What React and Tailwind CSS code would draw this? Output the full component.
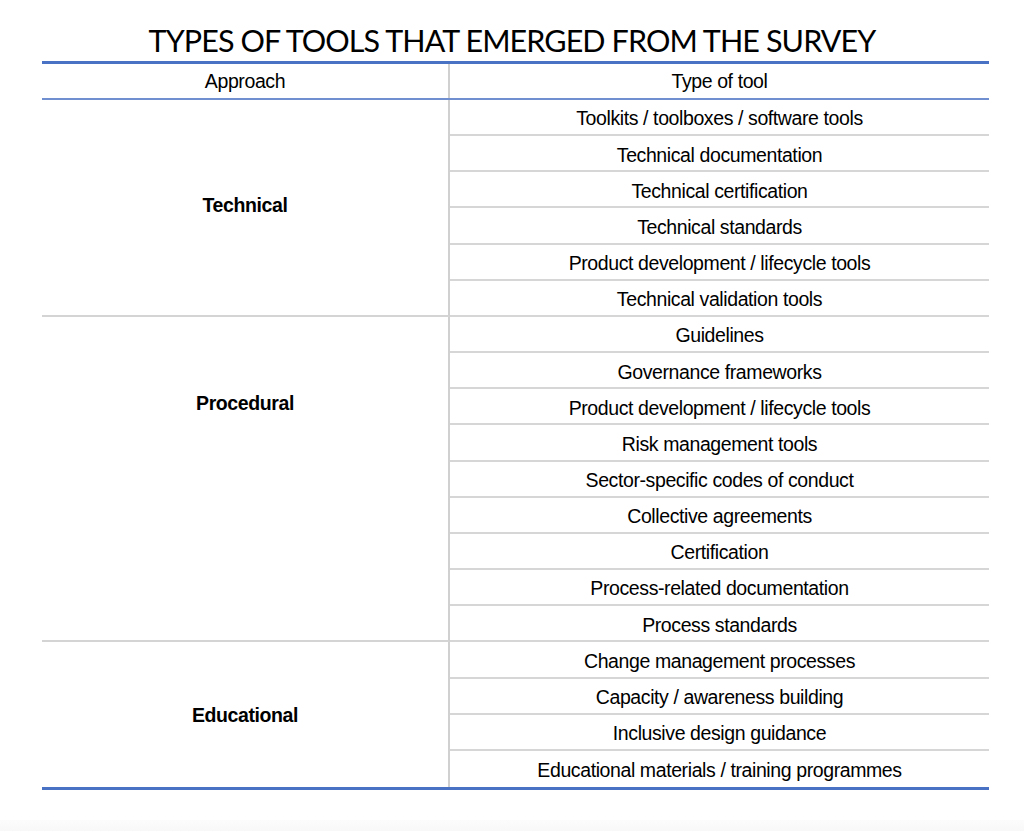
import React from "react";

const groups = [
  {
    name: "Technical",
    pt: "pt-[93px]",
    items: [
      "Toolkits / toolboxes / software tools",
      "Technical documentation",
      "Technical certification",
      "Technical standards",
      "Product development / lifecycle tools",
      "Technical validation tools",
    ],
  },
  {
    name: "Procedural",
    pt: "pt-[74px]",
    items: [
      "Guidelines",
      "Governance frameworks",
      "Product development / lifecycle tools",
      "Risk management tools",
      "Sector-specific codes of conduct",
      "Collective agreements",
      "Certification",
      "Process-related documentation",
      "Process standards",
    ],
  },
  {
    name: "Educational",
    pt: "pt-[61px]",
    items: [
      "Change management processes",
      "Capacity / awareness building",
      "Inclusive design guidance",
      "Educational materials / training programmes",
    ],
  },
];

export default function App() {
  return (
    <div className="w-[1024px] h-[831px] bg-white flex flex-col text-black overflow-hidden">
      <div className="flex-1 flex flex-col">
        <div className="pt-[21px] h-[61px] flex justify-center">
          <h1
            className="h-[39px] text-[30.5px] leading-[39px] tracking-[-0.9px] text-black"
            style={{ fontFamily: 'Lato, "Open Sans", sans-serif' }}
          >
            TYPES OF TOOLS THAT EMERGED FROM THE SURVEY
          </h1>
        </div>
        <div
          className="w-[947px] ml-[42px] border-t-[3px] border-[#4a72c4] border-b-[3px] border-b-[#4a72c4]"
          style={{ fontFamily: '"Liberation Sans", Arial, sans-serif' }}
        >
          <div className="flex h-[36px] border-b-2 border-[#6f8fd0] text-[19.5px]">
            <div className="w-[408px] flex items-center justify-center border-r-2 border-[#d0d0d0] tracking-[-0.4px] pt-[2px]">
              Approach
            </div>
            <div className="flex-1 flex items-center justify-center tracking-[-0.4px] pt-[2px]">
              Type of tool
            </div>
          </div>
          {groups.map((g, gi) => {
            const lastGroup = gi === groups.length - 1;
            return (
              <div key={g.name} className="flex">
                <div
                  className={
                    "w-[408px] flex justify-center border-r-2 border-[#d0d0d0] font-bold text-[19.5px] leading-[24px] tracking-[-0.4px] " +
                    g.pt +
                    (lastGroup ? "" : " border-b-2 border-b-[#d4d4d4]")
                  }
                >
                  {g.name}
                </div>
                <div className="flex-1 flex flex-col">
                  {g.items.map((it, i) => {
                    const last = lastGroup && i === g.items.length - 1;
                    return (
                      <div
                        key={i}
                        className={
                          "h-[36.16px] flex items-center justify-center text-[19.5px] tracking-[-0.4px] pt-[4px] " +
                          (last ? "" : "border-b-2 border-[#d6d6d6]")
                        }
                      >
                        {it}
                      </div>
                    );
                  })}
                </div>
              </div>
            );
          })}
        </div>
      </div>
      <div className="h-[11px] bg-gradient-to-b from-[#fcfcfc] to-[#f8f8f8]" />
    </div>
  );
}
